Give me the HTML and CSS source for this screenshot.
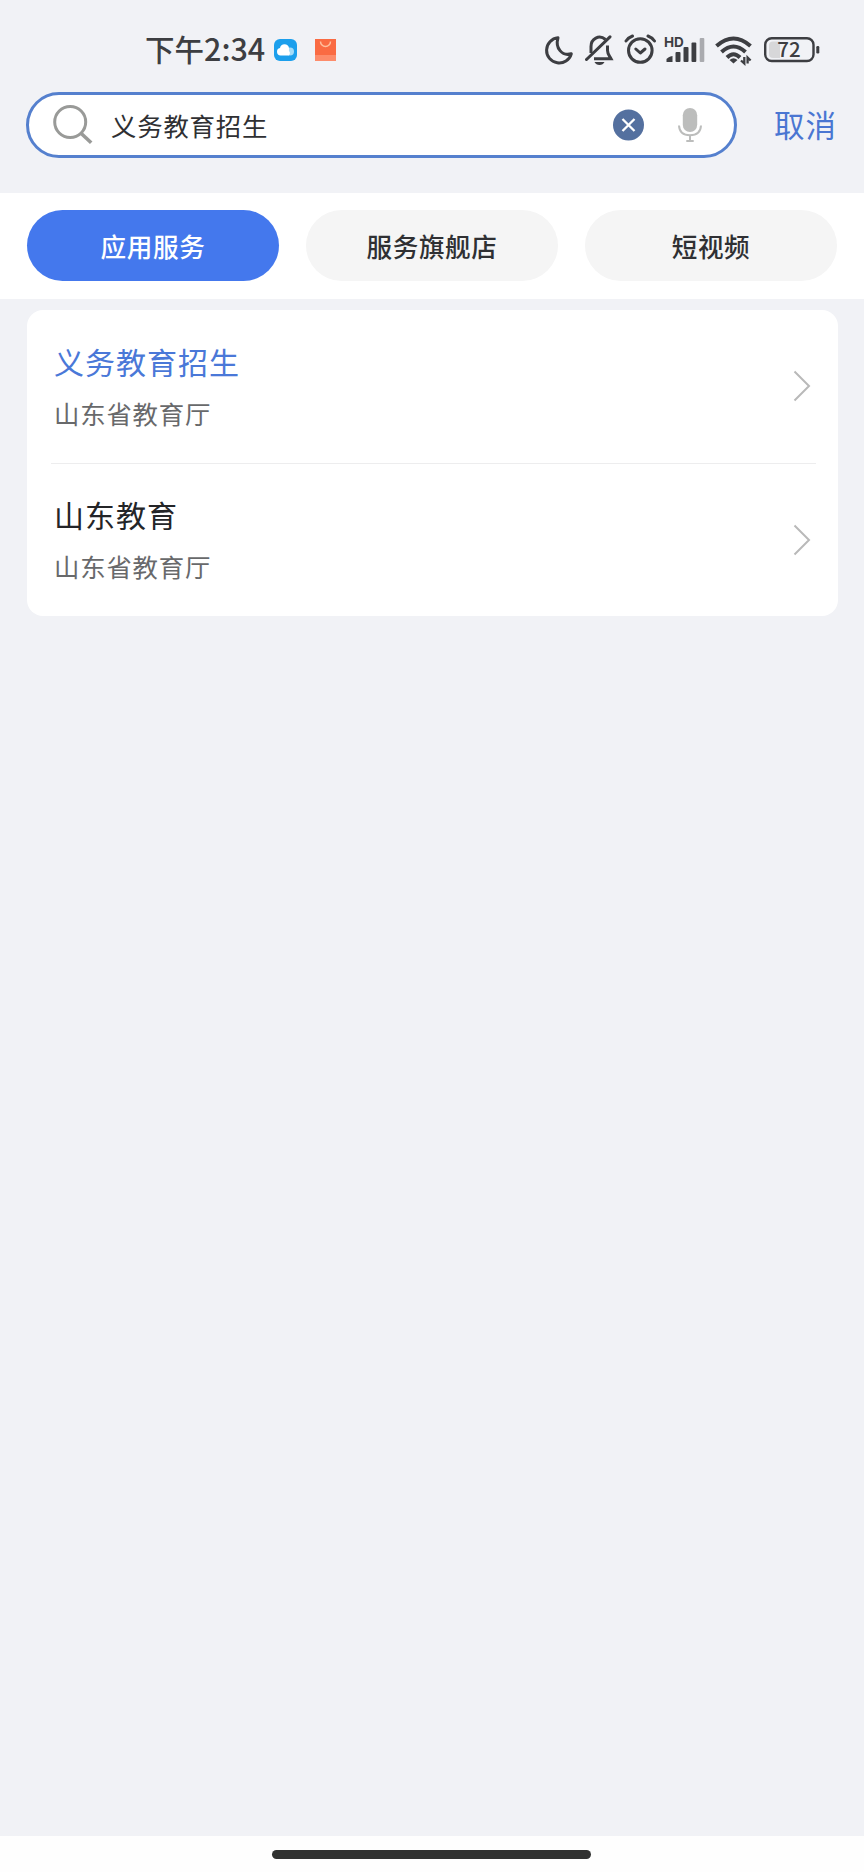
FILE: index.html
```html
<!DOCTYPE html>
<html lang="zh-CN">
<head>
<meta charset="utf-8">
<title>搜索</title>
<link rel="stylesheet" href="styles.css">
</head>
<body>
<div class="screen">
  <div class="status">
    <span class="time">下午<span class="digits">2:34</span></span>
    <svg class="cloud" width="23" height="24" viewBox="0 0 23 24">
      <rect y="1" width="23" height="22" rx="6" fill="#1c9fec"/>
      <circle cx="16" cy="13.500" r="4" fill="#a5dcf8"/>
      <path d="M6.500 17.500a3.800 3.800 0 0 1-.5-7.500 4.600 4.600 0 0 1 9 0c.2 1.500-.5 2.500.3 3.500s1 2.500-.5 4z" fill="#fff"/>
    </svg>
    <svg class="bag" width="21" height="24" viewBox="0 0 21 24">
      <rect y="1" width="21" height="22" fill="#fa6b43"/>
      <rect y="17" width="21" height="6" fill="#fd8c6b"/>
      <path d="M5.500 3.500a5 5 0 0 0 10 0" fill="none" stroke="#ffc09f" stroke-width="1.500"/>
    </svg>
    <div class="indicators">
      <svg width="30" height="40" viewBox="544 30 30 40">
        <path d="M558 37.800A12.600 12.600 0 1 0 571.300 53.800C562 56.500 555 48 558 37.800Z" fill="none" stroke="#3d3e42" stroke-width="3" stroke-linejoin="round"/>
      </svg>
      <svg width="29" height="40" viewBox="585 30 29 40">
        <g fill="none" stroke="#3d3e42" stroke-width="3">
          <path d="M605.500 39.500C599 34 591 39 591 46.500V53M607.500 45.500V50.500C607.500 54 609.500 56 611 58.700H594"/>
          <path d="M586.500 59.500L610 36.800" stroke-linecap="round"/>
        </g>
        <path d="M594.500 62H604.500Q603 65 599.500 65T594.500 62Z" fill="#3d3e42"/>
      </svg>
      <svg width="32" height="40" viewBox="624 30 32 40">
        <g fill="none" stroke="#3d3e42" stroke-width="3" stroke-linecap="round">
          <circle cx="640.300" cy="50.500" r="11.800"/>
          <path d="M626 41Q628.500 37.500 632.500 36M648 36Q652 37.500 654.500 41"/>
          <path d="M635.800 49L640.300 53L645 49" stroke-linejoin="round"/>
        </g>
      </svg>
      <svg width="41" height="40" viewBox="664 30 41 40">
        <text x="664" y="46.500" class="hd">HD</text>
        <g fill="#3d3e42">
          <path d="M666.500 62V59.500Q668 56.500 672.500 56V62Z"/>
          <rect x="675.500" y="52" width="5" height="10" rx="1"/>
          <rect x="683.500" y="47" width="5" height="15" rx="1"/>
          <rect x="691.500" y="42.500" width="4.800" height="19.500" rx="1"/>
          <rect x="699.700" y="38" width="4.600" height="24" rx="1" fill="#aaabaf"/>
        </g>
      </svg>
      <svg width="37" height="40" viewBox="715 30 37 40">
        <g fill="none" stroke="#3d3e42" stroke-width="4">
          <path d="M716.500 46Q733.500 31 750.500 46"/>
          <path d="M721.500 52Q733.500 41 745.500 52"/>
          <path d="M727 57.500Q733.500 51 740 57.500"/>
        </g>
        <path d="M729.500 60Q733.500 56.500 737.500 60L733.500 63.500Z" fill="#3d3e42"/>
        <path d="M744.300 57V63.500L741 60.500M747.600 63.500V57.500L750.600 60.500" fill="none" stroke="#3d3e42" stroke-width="2.300"/>
      </svg>
      <svg width="56" height="40" viewBox="764 30 56 40">
        <rect x="765.200" y="38.200" width="48.300" height="22.800" rx="6.500" fill="#f1f2f6" stroke="#3d3e42" stroke-width="2.400"/>
        <path d="M773 41.500H780V58H773Q769 58 769 54V45.500Q769 41.500 773 41.500Z" fill="#d7d7d9"/>
        <rect x="816.300" y="46" width="3" height="7.500" rx="1.200" fill="#3d3e42"/>
        <text x="789" y="57" text-anchor="middle" class="level">72</text>
      </svg>
    </div>
  </div>

  <div class="search-row">
    <div class="search-box">
      <svg class="lens" width="40" height="40" viewBox="0 0 40 40" fill="none" stroke="#999a98">
        <circle cx="17.200" cy="17" r="15.500" stroke-width="3"/>
        <path d="M28 28.200L38.200 37.800" stroke-width="3.600"/>
      </svg>
      <span class="query">义务教育招生</span>
      <svg class="clear" width="31" height="32" viewBox="0 0 31 32">
        <circle cx="15.500" cy="16" r="15.500" fill="#54709f"/>
        <path d="M9.500 10L21.500 22M21.500 10L9.500 22" stroke="#fff" stroke-width="2.300"/>
      </svg>
      <svg class="mic" width="24" height="36" viewBox="0 0 24 36">
        <rect x="4.800" y="1" width="14.400" height="24" rx="7.200" fill="#bcbdbc"/>
        <path d="M1 18.500Q1.500 28.300 12 28.300T23 18.500M12 28.500V34M8.300 34H15.700" fill="none" stroke="#bcbdbc" stroke-width="2"/>
      </svg>
    </div>
    <span class="cancel">取消</span>
  </div>

  <div class="tabs">
    <div class="tab active">应用服务</div>
    <div class="tab">服务旗舰店</div>
    <div class="tab">短视频</div>
  </div>

  <div class="results">
    <div class="result">
      <div class="info">
        <div class="name match">义务教育招生</div>
        <div class="dept">山东省教育厅</div>
      </div>
      <svg width="18" height="32" viewBox="0 0 18 32"><path d="M1.500 1.500L16 16L1.500 30.500" fill="none" stroke="#b9b9b9" stroke-width="2"/></svg>
    </div>
    <div class="divider"></div>
    <div class="result">
      <div class="info">
        <div class="name">山东教育</div>
        <div class="dept">山东省教育厅</div>
      </div>
      <svg width="18" height="32" viewBox="0 0 18 32"><path d="M1.500 1.500L16 16L1.500 30.500" fill="none" stroke="#b9b9b9" stroke-width="2"/></svg>
    </div>
  </div>

  <div class="nav-bar"><div class="handle"></div></div>
</div>
</body>
</html>
```

FILE: styles.css
```css
* { box-sizing: border-box; }
body {
  margin: 0;
  font-family: "Noto Sans CJK SC", sans-serif;
  color: #2f3033;
}
svg { display: block; flex: none; }
.screen {
  width: 864px;
  height: 1872px;
  display: flex;
  flex-direction: column;
  background: #f1f2f6;
}
.status {
  height: 92px;
  padding: 10px 44px 0 145px;
  display: flex;
  align-items: flex-start;
}
.time {
  flex: none;
  width: 129px;
  height: 60px;
  margin-top: 8px;
  line-height: 60px;
  font-size: 29.500px;
  font-weight: 500;
  color: #3d3e42;
  white-space: nowrap;
}
.digits { font-size: 30.500px; }
.cloud { margin-top: 28px; }
.bag { margin: 28px 0 0 18px; }
.indicators {
  display: flex;
  margin: 20px 0 0 208px;
  gap: 10px;
}
.indicators svg:nth-child(1) { margin-right: 1px; }
.indicators svg:nth-child(4) { margin-left: -2px; }
.indicators svg:nth-child(6) { margin-left: 2px; }
.hd { font: 700 13.500px Inter, sans-serif; fill: #3d3e42; }
.level { font: 500 20.500px "Noto Sans CJK SC", sans-serif; fill: #3d3e42; }
.search-row {
  height: 101px;
  padding-left: 26px;
  display: flex;
  align-items: flex-start;
}
.search-box {
  width: 711px;
  height: 66px;
  display: flex;
  align-items: center;
  border: 3px solid #5580ce;
  border-radius: 33px;
  background: #fff;
  padding: 0 31px 0 24px;
}
.lens { margin-top: -1px; }
.query {
  flex: 1;
  margin: -1px 0 0 18px;
  font-size: 25.400px;
  letter-spacing: 0.800px;
  line-height: 40px;
}
.mic { margin: 0 1px 0 34px; }
.cancel {
  margin-left: 37px;
  font-size: 30.500px;
  letter-spacing: 1px;
  line-height: 64px;
  color: #4a76d2;
}
.tabs {
  height: 106px;
  padding: 17px 27px;
  display: grid;
  grid-template-columns: repeat(3, 1fr);
  gap: 27px;
  background: #fff;
}
.tab {
  height: 71px;
  border-radius: 36px;
  background: #f5f5f5;
  font-size: 25.600px;
  letter-spacing: 0.600px;
  font-weight: 500;
  line-height: 71px;
  text-align: center;
}
.active { background: #4478ed; color: #fff; }
.results {
  margin: 11px 26.500px 0;
  height: 306px;
  border-radius: 16px;
  background: #fff;
}
.result {
  height: 152.500px;
  padding: 0 27px 0 27.500px;
  display: flex;
  align-items: center;
  justify-content: space-between;
}
.name { font-size: 30px; letter-spacing: 1px; line-height: 50px; color: #242528; }
.match { color: #4a78d8; }
.dept { margin-top: 3px; font-size: 25.400px; letter-spacing: 0.800px; line-height: 48px; color: #68696b; }
.divider { height: 1px; margin: 0 22px 0 24.500px; background: #ededee; }
.nav-bar {
  height: 36px;
  margin-top: auto;
  padding-top: 14px;
  background: #fefefe;
}
.handle {
  width: 319px;
  height: 8.500px;
  margin-left: 272px;
  border-radius: 5px;
  background: #313231;
}
```
